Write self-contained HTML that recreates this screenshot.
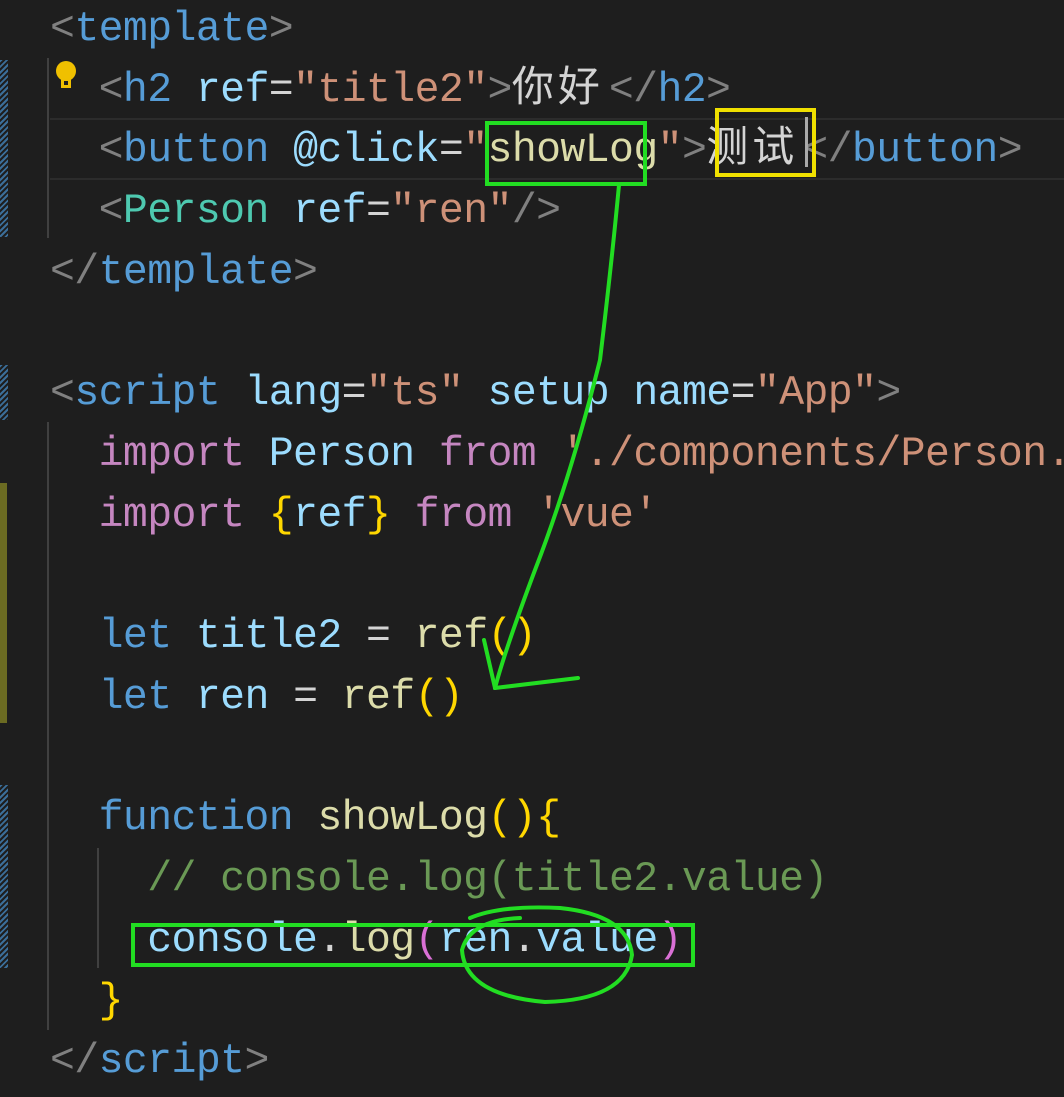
<!DOCTYPE html>
<html><head><meta charset="utf-8"><style>
html,body{margin:0;padding:0;background:#1e1e1e;width:1064px;height:1097px;overflow:hidden;position:relative}
.l{position:absolute;left:50px;right:0;overflow:hidden;height:61px;line-height:61px;white-space:pre;font-family:"Liberation Mono","Noto Sans CJK SC",monospace;font-size:41.5px;letter-spacing:-0.6px;color:#d4d4d4}
.cj{display:inline-block;width:97px;letter-spacing:4px;font-size:42px}
.g{color:#808080}.t{color:#569cd6}.a{color:#9cdcfe}.s{color:#ce9178}.c{color:#4ec9b0}.k{color:#c586c0}.y{color:#ffd700}.f{color:#dcdcaa}.m{color:#6a9955}.p{color:#da70d6}.w{color:#d4d4d4}
.hatch{position:absolute;left:0;width:8px;background:repeating-linear-gradient(135deg,#3b6e99 0 2px,#1e1e1e 2px 4px)}
.ig{position:absolute;width:2px;background:#404040}
</style></head><body>
<div class="hatch" style="top:60px;height:177px"></div>
<div class="hatch" style="top:365px;height:55px"></div>
<div style="position:absolute;left:0;top:483px;width:7px;height:240px;background:#6b6b22"></div>
<div class="hatch" style="top:785px;height:183px"></div>
<div style="position:absolute;left:50px;top:118px;width:1014px;height:58px;border-top:2px solid #2c2c2c;border-bottom:2px solid #2c2c2c"></div>
<div class="ig" style="left:47px;top:58px;height:180px"></div>
<div class="ig" style="left:47px;top:422px;height:608px"></div>
<div class="ig" style="left:97px;top:848px;height:120px"></div>
<svg style="position:absolute;left:54px;top:60px" width="24" height="30"><circle cx="12" cy="11" r="10" fill="#f0c000"/><rect x="7" y="18" width="10" height="10" fill="#f0c000"/><rect x="10" y="21" width="4" height="4" fill="#1e1e1e"/></svg>

<div class="l" style="top:-1px"><span class="g">&lt;</span><span class="t">template</span><span class="g">&gt;</span></div>
<div class="l" style="top:60px">  <span class="g">&lt;</span><span class="t">h2</span> <span class="a">ref</span>=<span class="s">"title2"</span><span class="g">&gt;</span><span class="cj">你好</span><span class="g">&lt;/</span><span class="t">h2</span><span class="g">&gt;</span></div>
<div class="l" style="top:120px">  <span class="g">&lt;</span><span class="t">button</span> <span class="a">@click</span>=<span class="s">"</span><span class="f">showLog</span><span class="s">"</span><span class="g">&gt;</span><span class="cj">测试</span><span class="g">&lt;/</span><span class="t">button</span><span class="g">&gt;</span></div>
<div class="l" style="top:181px">  <span class="g">&lt;</span><span class="c">Person</span> <span class="a">ref</span>=<span class="s">"ren"</span><span class="g">/&gt;</span></div>
<div class="l" style="top:242px"><span class="g">&lt;/</span><span class="t">template</span><span class="g">&gt;</span></div>
<div class="l" style="top:363px"><span class="g">&lt;</span><span class="t">script</span> <span class="a">lang</span>=<span class="s">"ts"</span> <span class="a">setup</span> <span class="a">name</span>=<span class="s">"App"</span><span class="g">&gt;</span></div>
<div class="l" style="top:424px">  <span class="k">import</span> <span class="a">Person</span> <span class="k">from</span> <span class="s">'./components/Person.vue'</span></div>
<div class="l" style="top:485px">  <span class="k">import</span> <span class="y">{</span><span class="a">ref</span><span class="y">}</span> <span class="k">from</span> <span class="s">'vue'</span></div>
<div class="l" style="top:606px">  <span class="t">let</span> <span class="a">title2</span> = <span class="f">ref</span><span class="y">()</span></div>
<div class="l" style="top:667px">  <span class="t">let</span> <span class="a">ren</span> = <span class="f">ref</span><span class="y">()</span></div>
<div class="l" style="top:788px">  <span class="t">function</span> <span class="f">showLog</span><span class="y">(){</span></div>
<div class="l" style="top:849px">    <span class="m">// console.log(title2.value)</span></div>
<div class="l" style="top:910px">    <span class="a">console</span>.<span class="f">log</span><span class="p">(</span><span class="a">ren</span>.<span class="a">value</span><span class="p">)</span></div>
<div class="l" style="top:971px">  <span class="y">}</span></div>
<div class="l" style="top:1031px"><span class="g">&lt;/</span><span class="t">script</span><span class="g">&gt;</span></div>

<svg style="position:absolute;left:0;top:0" width="1064" height="1097">
<g fill="none" stroke="#22dd22" stroke-width="4" stroke-linecap="round">
<rect x="487" y="123" width="158" height="61"/>
<rect x="133" y="925" width="560" height="40"/>
<path d="M619 185 Q612 260 600 360 Q570 480 535 570 Q505 650 495 688"/>
<path d="M495 688 L578 678"/>
<path d="M495 688 L484 640"/>
<path d="M520 918 Q470 920 462 950 Q465 995 545 1002 Q625 1000 632 955 Q628 915 560 908 Q500 905 470 918"/>
</g>
<rect x="717" y="110" width="97" height="65" fill="none" stroke="#f0e000" stroke-width="4"/>
<rect x="805" y="117" width="3" height="50" fill="#aaaaaa"/>
</svg>
</body></html>
